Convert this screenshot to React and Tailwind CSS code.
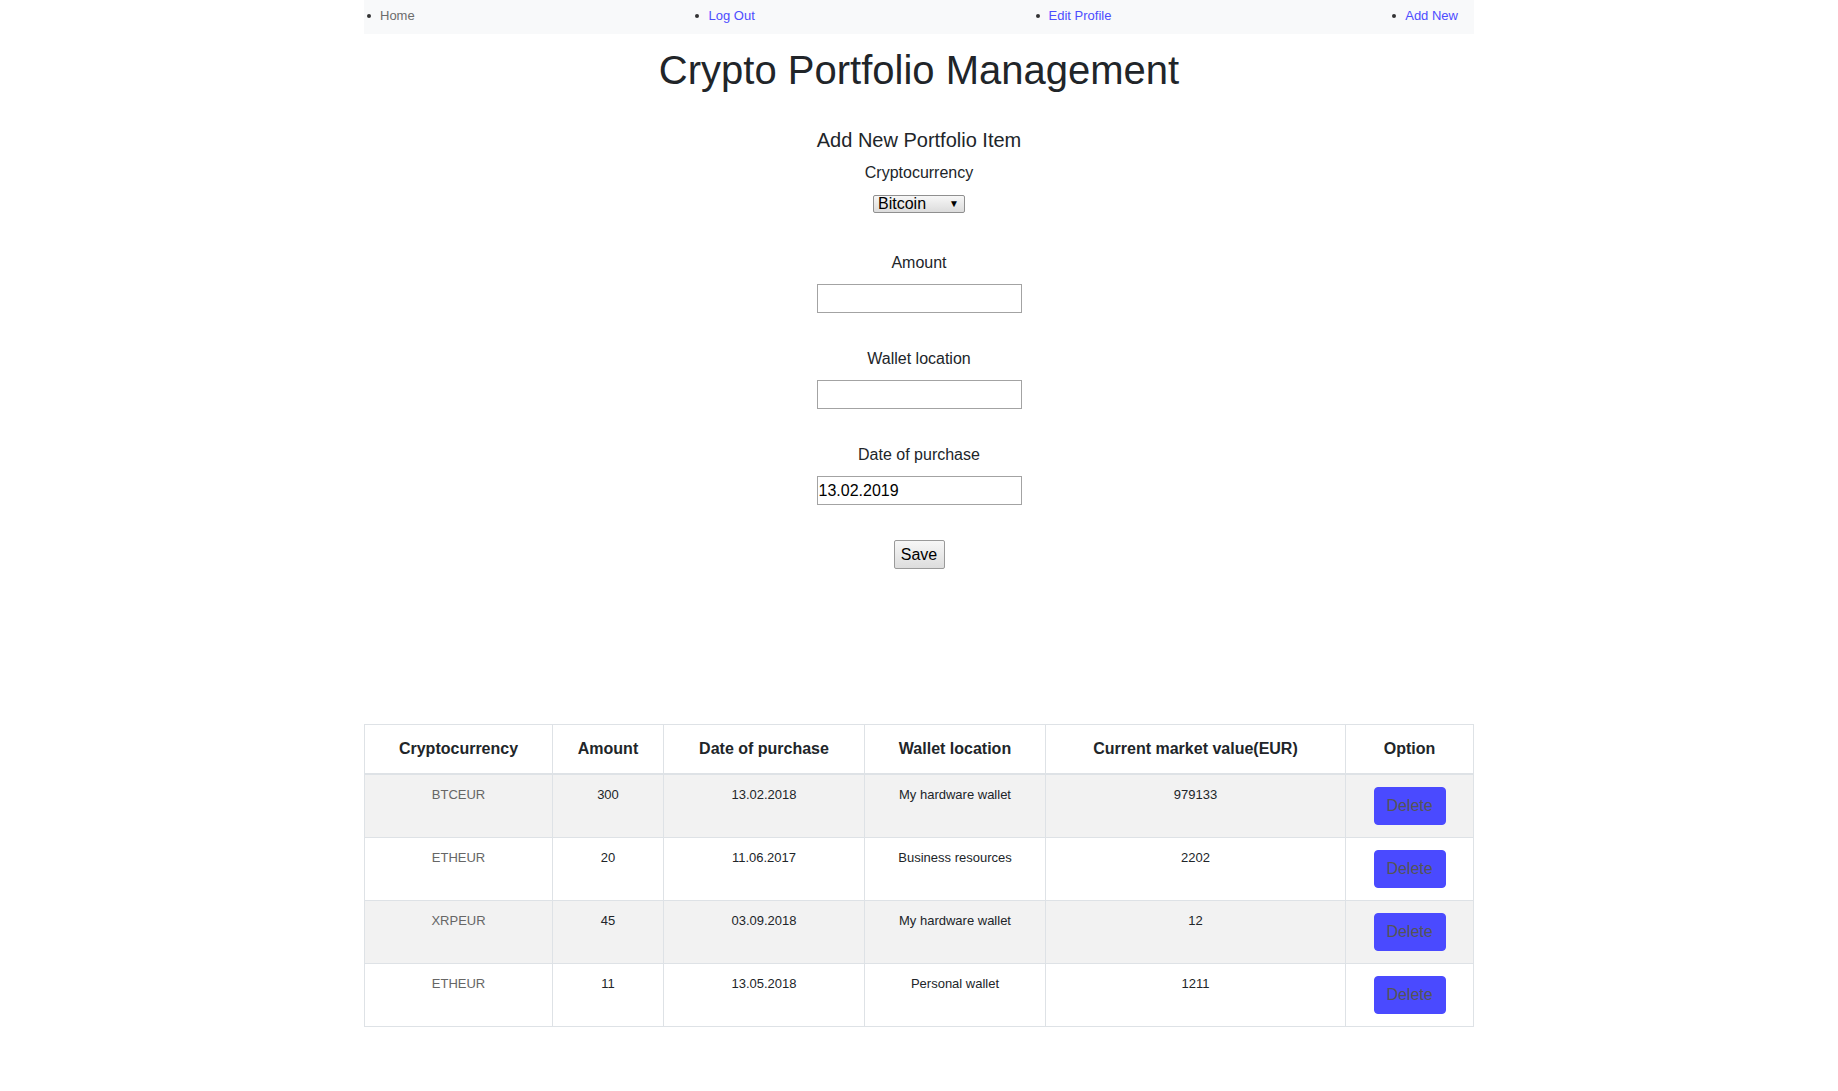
const navLinks = [
  { label: 'Home', active: false },
  { label: 'Log Out', active: true },
  { label: 'Edit Profile', active: true },
  { label: 'Add New', active: true },
];

const rows = [
  { coin: 'BTCEUR', amount: '300', date: '13.02.2018', wallet: 'My hardware wallet', value: '979133' },
  { coin: 'ETHEUR', amount: '20', date: '11.06.2017', wallet: 'Business resources', value: '2202' },
  { coin: 'XRPEUR', amount: '45', date: '03.09.2018', wallet: 'My hardware wallet', value: '12' },
  { coin: 'ETHEUR', amount: '11', date: '13.05.2018', wallet: 'Personal wallet', value: '1211' },
];

const headers = ['Cryptocurrency', 'Amount', 'Date of purchase', 'Wallet location', 'Current market value(EUR)', 'Option'];

function Field({ label, top, value = '' }) {
  return (
    <>
      <label className={`${top} block text-[16px] leading-6 text-[#212529]`}>{label}</label>
      <input
        readOnly
        value={value}
        className="mt-[9px] block h-[29px] w-[205px] border border-[#a3a3a3] bg-white px-[1px] text-[16px] text-black outline-none"
      />
    </>
  );
}

export default function App() {
  return (
    <div className="min-h-screen bg-white font-['Liberation_Sans',Arial,sans-serif] text-[#212529]">
      <div className="mx-auto w-[1110px]">
        {/* top nav */}
        <ul className="flex h-[34px] items-start justify-between bg-[#f8f9fa] pl-[3px] pr-4 pt-[8px] text-[13px] leading-[15px]">
          {navLinks.map((l) => (
            <li key={l.label} className="flex items-center">
              <span className="h-[4px] w-[4px] rounded-full bg-[#333]" />
              <a className={`ml-[9px] ${l.active ? 'text-[#4d4dff]' : 'text-[#6c6c6c]'}`}>{l.label}</a>
            </li>
          ))}
        </ul>

        <h1 className="mt-[12px] text-center text-[40px] leading-[48px]">Crypto Portfolio Management</h1>

        {/* add form */}
        <form className="flex flex-col items-center">
          <h5 className="mt-[34px] text-[20px] leading-6">Add New Portfolio Item</h5>
          <label className="mt-[9px] block text-[16px] leading-6">Cryptocurrency</label>
          <div className="mt-[10px] flex h-[18px] w-[92px] items-center justify-between rounded-[2px] border border-[#8f8f8f] bg-gradient-to-b from-[#f7f7f7] to-[#dcdcdc] pl-[4px] pr-[5px] text-black">
            <span className="text-[16px] leading-[16px]">Bitcoin</span>
            <span className="text-[10px] leading-none">▼</span>
          </div>

          <Field label="Amount" top="mt-[38px]" />
          <Field label="Wallet location" top="mt-[34px]" />
          <Field label="Date of purchase" top="mt-[34px]" value="13.02.2019" />

          <button
            type="button"
            className="mt-[35px] h-[29px] w-[51px] rounded-[2px] border border-[#9a9a9a] bg-gradient-to-b from-[#f7f7f7] to-[#dddddd] text-[16px] text-black"
          >
            Save
          </button>
        </form>

        {/* portfolio table */}
        <table className="mt-[155px] w-[1109px] table-fixed border-collapse border border-[#dee2e6] text-center">
          <colgroup>
            <col className="w-[188px]" />
            <col className="w-[111px]" />
            <col className="w-[201px]" />
            <col className="w-[181px]" />
            <col className="w-[300px]" />
            <col className="w-[128px]" />
          </colgroup>
          <thead>
            <tr>
              {headers.map((h) => (
                <th
                  key={h}
                  className="border border-b-2 border-[#dee2e6] px-3 py-3 align-bottom text-[16px] font-bold leading-6 text-[#212529]"
                >
                  {h}
                </th>
              ))}
            </tr>
          </thead>
          <tbody>
            {rows.map((r, i) => (
              <tr key={i} className={i % 2 === 0 ? 'bg-[#f2f2f2]' : 'bg-white'}>
                <td className="border border-[#dee2e6] p-3 align-top text-[13px] leading-[15px] text-[#666]">{r.coin}</td>
                <td className="border border-[#dee2e6] p-3 align-top text-[13px] leading-[15px]">{r.amount}</td>
                <td className="border border-[#dee2e6] p-3 align-top text-[13px] leading-[15px]">{r.date}</td>
                <td className="border border-[#dee2e6] p-3 align-top text-[13px] leading-[15px]">{r.wallet}</td>
                <td className="border border-[#dee2e6] p-3 align-top text-[13px] leading-[15px]">{r.value}</td>
                <td className="border border-[#dee2e6] p-3 align-top">
                  <button
                    type="button"
                    className="h-[38px] w-[72px] rounded-[4px] border border-[#4a4aff] bg-[#4a4aff] text-[16px] leading-6 text-[#555]"
                  >
                    Delete
                  </button>
                </td>
              </tr>
            ))}
          </tbody>
        </table>
      </div>
    </div>
  );
}
